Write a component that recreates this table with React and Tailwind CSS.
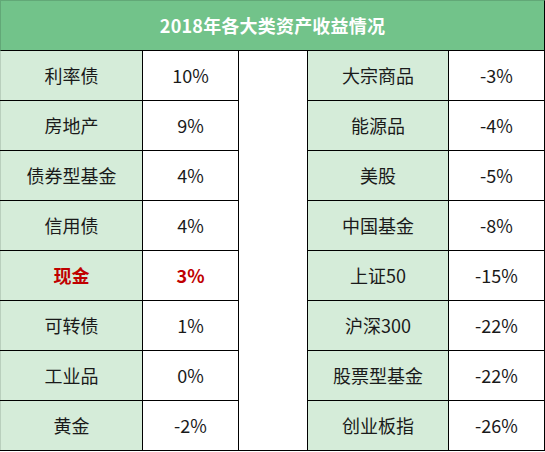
import React from 'react';

const leftRows = [
  { name: '利率债', value: '10%' },
  { name: '房地产', value: '9%' },
  { name: '债券型基金', value: '4%' },
  { name: '信用债', value: '4%' },
  { name: '现金', value: '3%', highlight: true },
  { name: '可转债', value: '1%' },
  { name: '工业品', value: '0%' },
  { name: '黄金', value: '-2%' },
];

const rightRows = [
  { name: '大宗商品', value: '-3%' },
  { name: '能源品', value: '-4%' },
  { name: '美股', value: '-5%' },
  { name: '中国基金', value: '-8%' },
  { name: '上证50', value: '-15%' },
  { name: '沪深300', value: '-22%' },
  { name: '股票型基金', value: '-22%' },
  { name: '创业板指', value: '-26%' },
];

const font = { fontFamily: '"Noto Sans CJK SC", "Noto Sans", sans-serif' };

const Block = ({ rows, nameWidth, valueWidth, first }) => (
  <div className="flex flex-col">
    {rows.map((row, idx) => (
      <div key={idx} className="flex h-[50px] border-b border-black">
        <div
          className={`${nameWidth} flex items-center justify-center bg-[#d5ecd9] border-r border-black ${
            first ? 'border-l border-l-[#b9cfbd]' : ''
          } ${row.highlight ? 'font-bold text-[#c00000]' : 'text-[#1a1a1a]'}`}
        >
          {row.name}
        </div>
        <div
          className={`${valueWidth} flex items-center justify-center bg-white border-r border-black ${
            row.highlight ? 'font-bold text-[#c00000]' : 'text-[#1a1a1a]'
          }`}
        >
          {row.value}
        </div>
      </div>
    ))}
  </div>
);

export default function App() {
  return (
    <div className="w-[545px] h-[452px] bg-white text-[18px]" style={font}>
      {/* Title bar */}
      <div className="h-[51px] flex items-center justify-center bg-[#72c38a] border-t border-t-[#62a877] border-l border-l-[#62a877] border-r border-r-black border-b border-black">
        <span className="text-white font-bold text-[18px] tracking-[0.2px]">2018年各大类资产收益情况</span>
      </div>

      <div className="flex">
        <Block rows={leftRows} nameWidth="w-[143px]" valueWidth="w-[96px]" first />
        {/* Spacer column */}
        <div className="w-[69px] bg-white border-r border-b border-black" />
        <Block rows={rightRows} nameWidth="w-[141px]" valueWidth="w-[96px]" />
      </div>
    </div>
  );
}
